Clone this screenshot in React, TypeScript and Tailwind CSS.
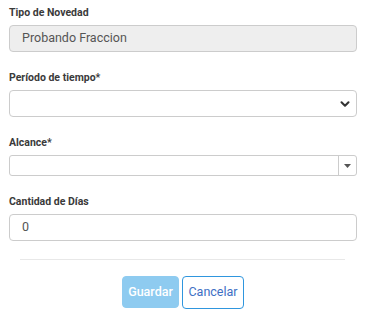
import { ChevronDown } from 'lucide-react'

function Label({ children }: { children: React.ReactNode }) {
  return (
    <label className="block h-[16px] mb-[4px] text-[10.5px] leading-[16px] font-bold text-[#3a3a3a]">
      {children}
    </label>
  )
}

export default function App() {
  return (
    <div className="w-[366px] h-[319px] bg-white px-[9px] pt-[5px]" style={{ fontFamily: 'Roboto, "Liberation Sans", sans-serif' }}>
      <div>
        <Label>Tipo de Novedad</Label>
        <div className="h-[27px] flex items-center px-[12px] rounded-[4px] border border-[#ccc] bg-[#eee] text-[12.5px] text-[#555]">
          Probando Fraccion
        </div>
      </div>

      <div className="mt-[18px]">
        <Label>Período de tiempo*</Label>
        <div className="h-[27px] flex items-center justify-end pr-[4px] rounded-[4px] border border-[#ccc] bg-white">
          <ChevronDown className="w-[14px] h-[14px] text-[#333]" strokeWidth={3.5} />
        </div>
      </div>

      <div className="mt-[18px]">
        <Label>Alcance*</Label>
        <div className="h-[21px] flex rounded-[3px] border border-[#ccc] bg-white">
          <div className="flex-1" />
          <div className="w-[18px] border-l border-[#ccc] flex items-center justify-center">
            <svg width="7" height="4" viewBox="0 0 7 4">
              <path d="M0 0 L7 0 L3.5 4 Z" fill="#555" />
            </svg>
          </div>
        </div>
      </div>

      <div className="mt-[18px]">
        <Label>Cantidad de Días</Label>
        <div className="h-[27px] flex items-center px-[12px] rounded-[4px] border border-[#ccc] bg-white text-[12.5px] text-[#555]">
          0
        </div>
      </div>

      <div className="mt-[18px] ml-[11px] mr-[12px] h-px bg-[#e8e8e8]" />

      <div className="mt-[16px] flex justify-center gap-[3px]">
        <button className="w-[57px] h-[32px] rounded-[4px] bg-[#8ecbf0] border border-[#8ecbf0] text-white text-[12.5px] font-medium">
          Guardar
        </button>
        <button className="w-[62px] h-[33px] rounded-[4px] bg-white border border-[#2f96de] text-[#3d6fc4] text-[12.5px]">
          Cancelar
        </button>
      </div>
    </div>
  )
}
